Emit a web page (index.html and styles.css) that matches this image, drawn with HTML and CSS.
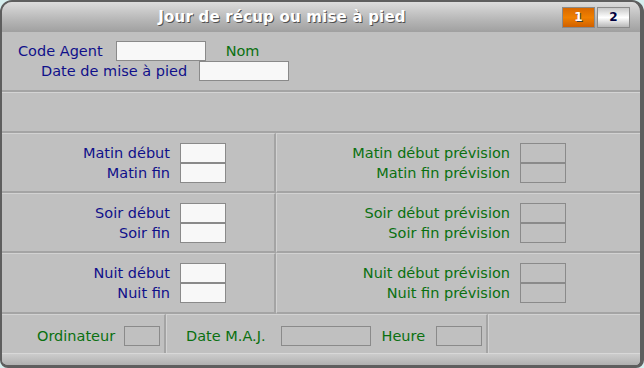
FILE: index.html
```html
<!DOCTYPE html>
<html lang="fr">

<head>
    <meta charset="UTF-8">
    <title>Jour de récup ou mise à pied</title>
    <link rel="stylesheet" href="styles.css">
</head>

<body>
    <div class="window">
        <div class="title-bar">
            <div class="title">Jour de récup ou mise à pied</div>
            <div class="tabs">
                <div class="tab active">1</div>
                <div class="tab">2</div>
            </div>
        </div>

        <div class="head">
            <div class="line line-agent">
                <span class="label">Code Agent</span>
                <span class="field wide"></span>
                <span class="label green nom">Nom</span>
            </div>
            <div class="line line-date">
                <span class="label">Date de mise à pied</span>
                <span class="field wide"></span>
            </div>
        </div>

        <div class="blank"></div>

        <div class="grid">
            <div class="cell left">
                <div class="pair"><span class="label">Matin début</span><span class="field"></span></div>
                <div class="pair"><span class="label">Matin fin</span><span class="field"></span></div>
            </div>
            <div class="cell right">
                <div class="pair"><span class="label green">Matin début prévision</span><span class="field grey"></span></div>
                <div class="pair"><span class="label green">Matin fin prévision</span><span class="field grey"></span></div>
            </div>
            <div class="cell left">
                <div class="pair"><span class="label">Soir début</span><span class="field"></span></div>
                <div class="pair"><span class="label">Soir fin</span><span class="field"></span></div>
            </div>
            <div class="cell right">
                <div class="pair"><span class="label green">Soir début prévision</span><span class="field grey"></span></div>
                <div class="pair"><span class="label green">Soir fin prévision</span><span class="field grey"></span></div>
            </div>
            <div class="cell left">
                <div class="pair"><span class="label">Nuit début</span><span class="field"></span></div>
                <div class="pair"><span class="label">Nuit fin</span><span class="field"></span></div>
            </div>
            <div class="cell right">
                <div class="pair"><span class="label green">Nuit début prévision</span><span class="field grey"></span></div>
                <div class="pair"><span class="label green">Nuit fin prévision</span><span class="field grey"></span></div>
            </div>
        </div>

        <div class="footer">
            <div class="foot-cell first">
                <span class="label green">Ordinateur</span>
                <span class="field grey small"></span>
            </div>
            <div class="foot-cell second">
                <span class="label green maj">Date M.A.J.</span>
                <span class="field grey wide"></span>
                <span class="label green">Heure</span>
                <span class="field grey"></span>
            </div>
            <div class="foot-cell third"></div>
        </div>

        <div class="bottom-bar"></div>
    </div>
</body>

</html>
```

FILE: styles.css
```css
body {
    margin: 0;
    padding: 0;
    background-color: #d6eeee;
    font-family: 'DejaVu Sans', Verdana, sans-serif;
}

.window {
    width: 644px;
    height: 368px;
    box-sizing: border-box;
    background-color: #c0c0c0;
    border: 2px solid #5e5e5e;
    border-right-width: 4px;
    border-bottom-width: 3px;
    border-radius: 12px 12px 8px 8px;
    overflow: hidden;
    display: flex;
    flex-direction: column;
}

.title-bar {
    height: 30px;
    flex-shrink: 0;
    display: flex;
    align-items: center;
    background: linear-gradient(#dcdcdc, #b6b6b6 60%, #a0a0a0);
}

.title {
    flex: 1;
    text-align: center;
    font-size: 15px;
    font-weight: bold;
    letter-spacing: 0.2px;
    color: #ffffff;
    text-shadow: 1px 1px 0 #505050;
}

.tabs {
    display: flex;
    gap: 2px;
    margin-right: 10px;
}

.tab {
    width: 31px;
    height: 19px;
    border: 1px solid #8a8a8a;
    background: linear-gradient(#c8c8c8, #ffffff 50%, #b8b8b8);
    font-size: 12px;
    font-weight: bold;
    color: #000040;
    text-align: center;
    line-height: 19px;
}

.tab.active {
    background: linear-gradient(#d86800, #f08000 50%, #d06000);
    color: #ffffff;
    text-shadow: 1px 1px 0 #404040;
}

.label {
    font-size: 14.5px;
    color: #10108a;
    white-space: nowrap;
}

.label.green {
    color: #0a7010;
}

.field {
    display: inline-block;
    width: 44px;
    height: 18px;
    box-sizing: content-box;
    border: 1px solid #8a8a8a;
    background-color: #f8f8f8;
    flex-shrink: 0;
}

.field.grey {
    background-color: #c0c0c0;
}

.field.wide {
    width: 88px;
}

.field.small {
    width: 34px;
}

.head {
    height: 60px;
    flex-shrink: 0;
    display: flex;
    flex-direction: column;
    padding-top: 9px;
    box-sizing: border-box;
    border-bottom: 2px solid #a4a4a4;
}

.line {
    display: flex;
    align-items: center;
    height: 20px;
}

.line-agent {
    padding-left: 16px;
    gap: 13px;
}

.line-agent .nom {
    margin-left: 7px;
}

.line-date {
    padding-left: 39px;
    gap: 12px;
}

.blank {
    height: 41px;
    flex-shrink: 0;
    box-sizing: border-box;
    border-top: 1px solid #d4d4d4;
    border-bottom: 2px solid #a4a4a4;
}

.grid {
    display: grid;
    grid-template-columns: 274px 1fr;
    grid-template-rows: 60px 60px 61px;
    flex-shrink: 0;
}

.cell {
    display: flex;
    flex-direction: column;
    justify-content: center;
    align-items: flex-end;
    border-bottom: 2px solid #a4a4a4;
    border-top: 1px solid #d2d2d2;
    box-sizing: border-box;
}

.cell.left {
    padding-right: 48px;
    border-right: 2px solid #a4a4a4;
}

.cell.right {
    padding-right: 74px;
    border-left: 1px solid #d2d2d2;
}

.pair {
    display: flex;
    align-items: center;
    gap: 10px;
}

.footer {
    display: flex;
    height: 39px;
    flex-shrink: 0;
}

.foot-cell {
    display: flex;
    align-items: center;
    gap: 9px;
    box-sizing: border-box;
    padding-top: 4px;
    border-top: 1px solid #d2d2d2;
}

.foot-cell.first {
    width: 164px;
    padding-left: 35px;
    border-right: 2px solid #a4a4a4;
}

.foot-cell.second {
    width: 322px;
    padding-left: 19px;
    gap: 11px;
    border-right: 2px solid #a4a4a4;
    border-left: 1px solid #d2d2d2;
}

.foot-cell.second .maj {
    margin-right: 4px;
}

.foot-cell.third {
    flex: 1;
    border-left: 1px solid #d2d2d2;
}

.bottom-bar {
    flex: 1;
    background: linear-gradient(#cccccc, #b0b0b0);
    border-top: 1px solid #d8d8d8;
}
```
